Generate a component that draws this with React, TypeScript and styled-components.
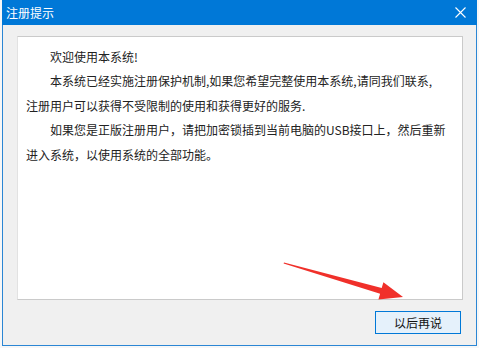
import React from "react";
import styled, { createGlobalStyle } from "styled-components";

const Global = createGlobalStyle`
  html, body { margin: 0; padding: 0; background: #f7f7f7; }
  body { width: 479px; height: 348px; overflow: hidden; }
`;

const Window = styled.div`
  position: relative;
  box-sizing: border-box;
  margin-left: 2px;
  width: 475px;
  height: 346px;
  border: 1px solid #2b86d4;
  border-top: none;
  background: #f0f0f0;
  display: flex;
  flex-direction: column;
  font-family: "Noto Sans CJK SC", "Noto Sans", sans-serif;
`;

const TitleBar = styled.div`
  height: 25px;
  margin: 0 -1px;
  padding: 0 0 0 4px;
  background: #0078d7;
  color: #fff;
  display: flex;
  align-items: center;
  justify-content: space-between;
  font-size: 12px;
  flex-shrink: 0;
`;

const Title = styled.span`
  line-height: 25px;
  letter-spacing: 0;
`;

const CloseBtn = styled.div`
  width: 34px;
  height: 25px;
  display: flex;
  align-items: center;
  justify-content: center;
  margin-right: 0px;
`;

const Body = styled.div`
  flex: 1;
  display: flex;
  flex-direction: column;
  padding: 11px 13px 0 14px;
`;

const Panel = styled.div`
  box-sizing: border-box;
  height: 264px;
  background: #fff;
  border: 1px solid #cacaca;
  border-left-color: #e2e2e2;
  padding: 8px 0 0 8px;
  color: #222;
  font-size: 12px;
`;

const Line = styled.div<{ $indent?: boolean }>`
  height: 24.4px;
  line-height: 24.4px;
  white-space: nowrap;
  padding-left: ${(p) => (p.$indent ? "24px" : "0")};
`;

const Footer = styled.div`
  display: flex;
  justify-content: flex-end;
  padding: 11px 2px 0 0;
`;

const Button = styled.button`
  box-sizing: border-box;
  width: 86px;
  height: 23px;
  border: 1px solid #0078d7;
  background: #e5f1fb;
  color: #111;
  font-family: "Noto Sans CJK SC", "Noto Sans", sans-serif;
  font-size: 12px;
  padding: 0;
  line-height: 21px;
`;

const Overlay = styled.svg`
  position: absolute;
  left: 0;
  top: 0;
  pointer-events: none;
`;

export default function App() {
  // arrow coords relative to window (window left at x=2)
  const ox = 2;
  const p = (x: number, y: number) => `${x - ox},${y}`;
  return (
    <>
      <Global />
      <Window>
        <TitleBar>
          <Title>注册提示</Title>
          <CloseBtn>
            <svg width="11" height="11" viewBox="0 0 11 11">
              <path d="M0.5 0.5 L10.5 10.5 M10.5 0.5 L0.5 10.5" stroke="#fff" strokeWidth="1.1" fill="none" />
            </svg>
          </CloseBtn>
        </TitleBar>
        <Body>
          <Panel>
            <Line $indent>欢迎使用本系统!</Line>
            <Line $indent>本系统已经实施注册保护机制,如果您希望完整使用本系统,请同我们联系,</Line>
            <Line>注册用户可以获得不受限制的使用和获得更好的服务.</Line>
            <Line $indent>如果您是正版注册用户，请把加密锁插到当前电脑的USB接口上，然后重新</Line>
            <Line>进入系统，以使用系统的全部功能。</Line>
          </Panel>
          <Footer>
            <Button>以后再说</Button>
          </Footer>
        </Body>
        <Overlay width="475" height="346">
          <polygon
            points={[
              p(283, 262.6),
              p(380.7, 288),
              p(382.4, 282.3),
              p(402, 297),
              p(377.4, 299.5),
              p(379.1, 293.8),
              p(282.6, 263.6),
            ].join(" ")}
            fill="#f0302a"
          />
        </Overlay>
      </Window>
    </>
  );
}
